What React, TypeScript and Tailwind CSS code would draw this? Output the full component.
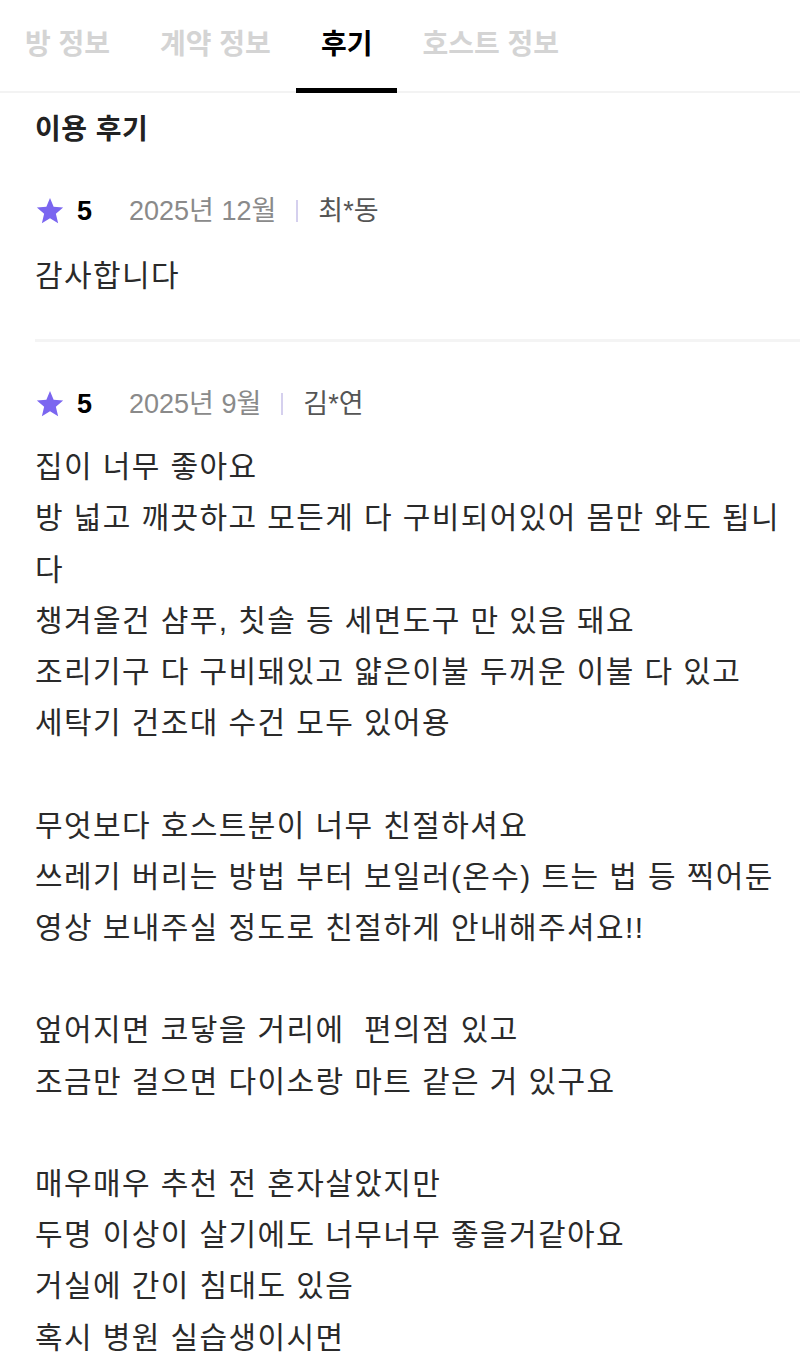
import { Fragment } from 'react';

const tabs = ['방 정보', '계약 정보', '후기', '호스트 정보'];

interface Review {
  score: number;
  date: string;
  name: string;
  body: string;
}

const reviews: Review[] = [
  { score: 5, date: '2025년 12월', name: '최*동', body: '감사합니다' },
  {
    score: 5,
    date: '2025년 9월',
    name: '김*연',
    body: [
      '집이 너무 좋아요',
      '방 넓고 깨끗하고 모든게 다 구비되어있어 몸만 와도 됩니다',
      '챙겨올건 샴푸, 칫솔 등 세면도구 만 있음 돼요',
      '조리기구 다 구비돼있고 얇은이불 두꺼운 이불 다 있고',
      '세탁기 건조대 수건 모두 있어용',
      '',
      '무엇보다 호스트분이 너무 친절하셔요',
      '쓰레기 버리는 방법 부터 보일러(온수) 트는 법 등 찍어둔 영상 보내주실 정도로 친절하게 안내해주셔요!!',
      '',
      '엎어지면 코닿을 거리에  편의점 있고',
      '조금만 걸으면 다이소랑 마트 같은 거 있구요',
      '',
      '매우매우 추천 전 혼자살았지만',
      '두명 이상이 살기에도 너무너무 좋을거같아요',
      '거실에 간이 침대도 있음',
      '혹시 병원 실습생이시면',
    ].join('\n'),
  },
];

function StarIcon() {
  return (
    <svg viewBox="0 0 24 24" className="w-[30px] h-[30px]" aria-hidden>
      <polygon
        points="12,1.5 14.9,8.6 22.5,9.2 16.7,14.2 18.5,21.7 12,17.7 5.5,21.7 7.3,14.2 1.5,9.2 9.1,8.6"
        fill="#7b66f0"
      />
    </svg>
  );
}

export default function App() {
  return (
    <div
      className="w-[800px] min-h-[1352px] bg-white text-[#222] overflow-hidden"
      style={{ fontFamily: '"Liberation Sans", "Noto Sans CJK KR", sans-serif' }}
    >
      {/* Tabs */}
      <div className="flex h-[93px] border-b-2 border-[#f3f3f3]">
        {tabs.map((tab) => (
          <div
            key={tab}
            className={`flex items-center px-[25px] pt-[2px] text-[28px] font-bold border-b-[5px] -mb-[2px] ${
              tab === '후기' ? 'border-black text-black' : 'border-transparent text-[#d4d4d4]'
            }`}
          >
            {tab}
          </div>
        ))}
      </div>

      {/* Reviews */}
      <div className="pl-[35px]">
        <h2 className="pt-[19px] text-[28px] leading-[36px] font-bold tracking-[0.5px] text-[#222]">이용 후기</h2>

        {reviews.map((r, idx) => (
          <Fragment key={idx}>
            {idx > 0 && <div className="h-[3px] bg-[#f4f4f4]" />}
            <div className={idx === 0 ? 'pt-[45px] pb-[38px]' : 'pt-[44px] pb-[20px]'}>
              <div className="flex items-center h-[36px] pr-[20px]">
                <StarIcon />
                <span className="ml-[12px] text-[27px] font-bold text-black">{r.score}</span>
                <span className="ml-[37px] text-[27px] text-[#8a8a8a]">{r.date}</span>
                <span className="mx-[20px] w-[2px] h-[22px] bg-[#d5d0ee]" />
                <span className="text-[27px] text-[#555]">{r.name}</span>
              </div>
              <p
                className={`pr-[12px] text-[30px] leading-[51.2px] tracking-[1.4px] text-[#2a2a2a] whitespace-pre-wrap ${
                  idx === 0 ? 'mt-[21px]' : 'mt-[19px]'
                }`}
              >
                {r.body}
              </p>
            </div>
          </Fragment>
        ))}
      </div>
    </div>
  );
}
